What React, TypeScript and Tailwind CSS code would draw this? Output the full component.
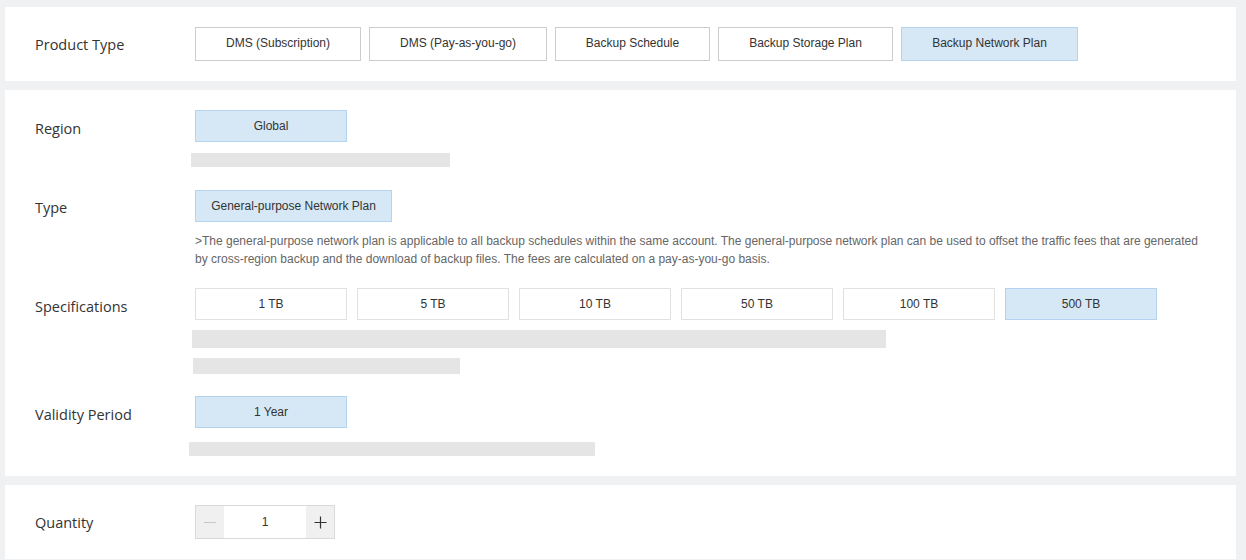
import React from "react";

const LABEL = "w-[190px] shrink-0 pl-[30px] text-[14.5px] text-[#333] font-['Open_Sans',sans-serif] flex items-center";
const BTN = "flex items-center justify-center border text-[12px] text-[#333] font-['Liberation_Sans',Arial,sans-serif]";

function Opt({ label, selected, w, h = 32, light }: { label: string; selected?: boolean; w: string; h?: number; light?: boolean }) {
  const tone = selected
    ? "bg-[#d6e8f5] border-[#b4d3ee]"
    : light
    ? "bg-white border-[#e1e1e1]"
    : "bg-white border-[#cccccc]";
  return (
    <div className={`${BTN} ${tone} ${w} ${h === 34 ? "h-[34px] pb-[2px]" : "h-[32px]"}`}>{label}</div>
  );
}

export default function App() {
  return (
    <div className="h-[560px] w-[1246px] overflow-hidden bg-[#f0f1f3] pl-[5px] pr-[10px] pt-[7px] flex flex-col gap-[9px]">
      {/* product type */}
      <div className="bg-white flex py-[20px]">
        <div className={`${LABEL} h-[34px] pt-[1px]`}>Product Type</div>
        <div className="flex gap-[8px]">
          <Opt label="DMS (Subscription)" w="w-[166px]" h={34} />
          <Opt label="DMS (Pay-as-you-go)" w="w-[178px]" h={34} />
          <Opt label="Backup Schedule" w="w-[155px]" h={34} />
          <Opt label="Backup Storage Plan" w="w-[175px]" h={34} />
          <Opt label="Backup Network Plan" w="w-[177px]" h={34} selected />
        </div>
      </div>

      {/* config */}
      <div className="bg-white flex flex-col pt-[20px] pb-[20px]">
        <div className="flex">
          <div className={`${LABEL} h-[32px] pt-[6px]`}>Region</div>
          <div className="flex flex-col">
            <Opt label="Global" w="w-[152px]" selected />
            <div className="mt-[11px] ml-[-4px] h-[14px] w-[259px] bg-[#e5e5e5]" />
          </div>
        </div>

        <div className="flex mt-[23px]">
          <div className={`${LABEL} h-[32px] pt-[3px]`}>Type</div>
          <div className="flex flex-col">
            <Opt label="General-purpose Network Plan" w="w-[197px]" selected />
            <p className="mt-[10px] max-w-[1012px] text-[12px] leading-[18px] text-[#666] font-['Liberation_Sans',Arial,sans-serif]">
              &gt;The general-purpose network plan is applicable to all backup schedules within the same account. The general-purpose network plan can be used to offset the traffic fees that are generated by cross-region backup and the download of backup files. The fees are calculated on a pay-as-you-go basis.
            </p>
          </div>
        </div>

        <div className="flex mt-[20px]">
          <div className={`${LABEL} h-[32px] pt-[6px]`}>Specifications</div>
          <div className="flex flex-col">
            <div className="flex gap-[10px]">
              {["1 TB", "5 TB", "10 TB", "50 TB", "100 TB"].map((s) => (
                <Opt key={s} label={s} w="w-[152px]" light />
              ))}
              <Opt label="500 TB" w="w-[152px]" selected />
            </div>
            <div className="mt-[10px] ml-[-3px] h-[18px] w-[694px] bg-[#e5e5e5]" />
            <div className="mt-[10px] ml-[-2px] h-[16px] w-[267px] bg-[#e5e5e5]" />
          </div>
        </div>

        <div className="flex mt-[22px]">
          <div className={`${LABEL} h-[32px] pt-[6px]`}>Validity Period</div>
          <div className="flex flex-col">
            <Opt label="1 Year" w="w-[152px]" selected />
            <div className="mt-[14px] ml-[-6px] h-[14px] w-[406px] bg-[#e5e5e5]" />
          </div>
        </div>
      </div>

      {/* quantity */}
      <div className="bg-white flex py-[20px]">
        <div className={`${LABEL} h-[34px] pt-[2px]`}>Quantity</div>
        <div className="flex h-[34px] w-[140px] border border-[#d9d9d9]">
          <div className="w-[28px] bg-[#f0f0f0] flex items-center justify-center">
            <div className="h-px w-[12px] bg-[#c8c8c8]" />
          </div>
          <div className="flex-1 flex items-center justify-center text-[12px] text-[#333] font-['Liberation_Sans',Arial,sans-serif]">1</div>
          <div className="w-[28px] bg-[#f0f0f0] flex items-center justify-center">
            <svg width="13" height="13" viewBox="0 0 13 13">
              <path d="M6.5 0.5v12M0.5 6.5h12" stroke="#333" strokeWidth="1.2" />
            </svg>
          </div>
        </div>
      </div>
    </div>
  );
}
